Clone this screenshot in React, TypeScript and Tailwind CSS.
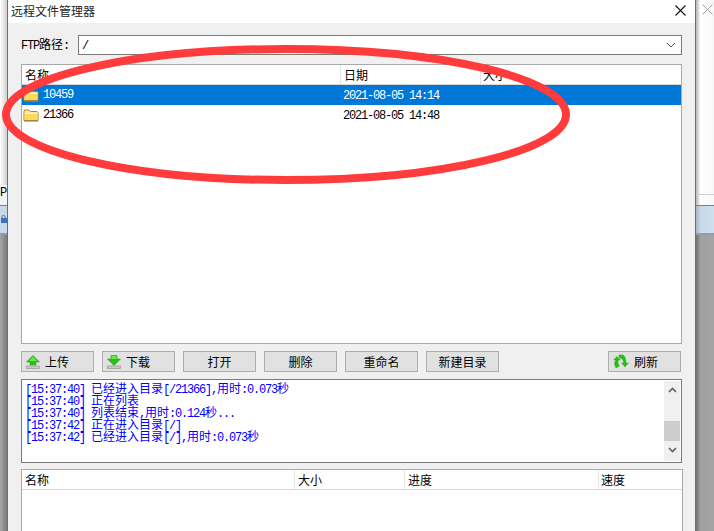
const cjk = "font-['Noto_Sans_CJK_SC','Noto_Sans',sans-serif]";

// ASCII runs get squeezed to 6px per char like the bitmap font in the picture
function T({ s }: { s: string }) {
  const parts = s.match(/[\x00-\x7f]+|[^\x00-\x7f]+/g) || [];
  return (
    <>
      {parts.map((p, i) =>
        /^[\x00-\x7f]/.test(p) ? (
          <span key={i} className="font-['Liberation_Mono',monospace] tracking-[-1.2px] whitespace-pre">
            {p}
          </span>
        ) : (
          <span key={i}>{p}</span>
        )
      )}
    </>
  );
}

function FolderIcon() {
  return (
    <svg width="16" height="14" viewBox="0 0 16 14" className="shrink-0">
      <path d="M1 3.5 L1.5 2 L6 2 L7.5 3.5 L14 3.5 L15 4.5 L15 12.5 L1 12.5 Z" fill="#fbe9a0" stroke="#a8852c" strokeWidth="1" />
      <path d="M1.5 6 L14.5 6 L14.5 12 L1.5 12 Z" fill="#fdd95f" />
      <path d="M1.5 5.5 L14.5 5.5" stroke="#fff6cf" strokeWidth="1" />
      <path d="M1 13.5 L15.5 13.5" stroke="#8f8f8f" strokeWidth="1" opacity="0.6" />
    </svg>
  );
}

function UpIcon() {
  return (
    <svg width="14" height="14" viewBox="0 0 14 14" className="shrink-0">
      <path d="M7 0.5 L13.5 7 L10 7 L10 10 L4 10 L4 7 L0.5 7 Z" fill="#22c21a" stroke="#2f9e24" strokeWidth="0.6" />
      <path d="M7 1.5 L11 6 L3 6 Z" fill="#6fe04a" />
      <rect x="0.5" y="11" width="13" height="2.5" fill="#c9c9c9" stroke="#8a8a8a" strokeWidth="0.6" />
    </svg>
  );
}

function DownIcon() {
  return (
    <svg width="14" height="14" viewBox="0 0 14 14" className="shrink-0">
      <path d="M4 0.5 L10 0.5 L10 4 L13.5 4 L7 10.5 L0.5 4 L4 4 Z" fill="#22c21a" stroke="#2f9e24" strokeWidth="0.6" />
      <path d="M4.5 1 L9.5 1 L9.5 4 L4.5 4 Z" fill="#6fe04a" />
      <rect x="0.5" y="11" width="13" height="2.5" fill="#c9c9c9" stroke="#8a8a8a" strokeWidth="0.6" />
    </svg>
  );
}

function RefreshIcon() {
  return (
    <svg width="16" height="16" viewBox="0 0 16 16" className="shrink-0">
      <path d="M3 14 C1 11 1 8 3 6 L0.5 6 L4 2.5 L7.5 6 L5.5 6 C4.5 8 5 10 6.5 12 Z" fill="#16c60c" stroke="#5a9e2a" strokeWidth="0.5" />
      <path d="M6 1 L10 1 C12 2 13 5 13 9 L15.5 9 L12 13 L8.5 9 L10.5 9 C10.5 6 9 4 6 3.5 Z" fill="#16c60c" stroke="#5a9e2a" strokeWidth="0.5" />
    </svg>
  );
}

function Btn({ w = "", icon, label, iconGap }: { w?: string; icon?: React.ReactNode; label: string; iconGap?: string }) {
  return (
    <button className={`w-[73px] h-[21px] bg-[#e1e1e1] border border-[#adadad] flex items-center text-[12px] leading-none text-black ${w} ${icon ? "justify-start pl-[4px]" : "justify-center"}`}>
      {icon}
      <span className={iconGap}>{label}</span>
    </button>
  );
}

const logLines = [
  "[15:37:40] 已经进入目录[/21366],用时:0.073秒",
  "[15:37:40] 正在列表",
  "[15:37:40] 列表结束,用时:0.124秒...",
  "[15:37:42] 正在进入目录[/]",
  "[15:37:42] 已经进入目录[/],用时:0.073秒",
];

const files = [
  { name: "10459", date: "2021-08-05 14:14", selected: true },
  { name: "21366", date: "2021-08-05 14:48", selected: false },
];

export default function App() {
  return (
    <div className={`relative flex w-[714px] h-[531px] overflow-hidden bg-white text-[12px] text-black ${cjk}`}>
      {/* window behind, left edge */}
      <div className="w-[7px] shrink-0 flex flex-col">
        <div className="h-[185px] bg-gradient-to-r from-white to-[#d0d0d0]" />
        <div className="h-[20px] bg-[#f4f4f4] font-['Liberation_Mono',monospace] text-[12px] leading-[14px] pt-[1px] overflow-hidden whitespace-nowrap">P</div>
        <div className="h-[30px] bg-[#c9d9e8] border-t border-[#808080] border-b-2 border-b-[#8c9cb4] overflow-hidden flex items-center">
          <svg width="7" height="10" viewBox="0 0 7 10" className="mt-[-2px]">
            <path d="M2 4 L2 2.5 C2 1 5 1 5 2.5 L5 4" fill="none" stroke="#5a6f9a" strokeWidth="1" />
            <rect x="1" y="4" width="6" height="5" fill="#3f6fc4" />
          </svg>
        </div>
        <div className="flex-1 bg-gradient-to-r from-[#a6a6a6] to-[#7a7a7a]" />
      </div>

      {/* dialog */}
      <div className="w-[689px] shrink-0 border-x border-x-[#6e6e6e] bg-[#f0f0f0] flex flex-col overflow-hidden">
        <div className="h-[23px] shrink-0 bg-white flex items-center justify-between pl-[3px] pr-[9px]">
          <span className="text-[12px] leading-none text-[#222] mt-[-2px]">远程文件管理器</span>
          <svg width="11" height="11" viewBox="0 0 11 11" className="mt-[-2px]">
            <path d="M0.5 0.5 L10.5 10.5 M10.5 0.5 L0.5 10.5" stroke="#111" strokeWidth="1.1" />
          </svg>
        </div>

        <div className="pl-[13px] pt-[12px] flex flex-col shrink-0">
          {/* path */}
          <div className="flex items-center w-[661px] h-[20px]">
            <span className="w-[57px] leading-none"><T s="FTP" />路径<T s=":" /></span>
            <div className="flex-1 h-[20px] bg-white border border-[#7a7a7a] flex items-center justify-between pl-[3px] pr-[5px]">
              <span className="leading-none"><T s="/" /></span>
              <svg width="10" height="6" viewBox="0 0 10 6">
                <path d="M1 1 L5 5 L9 1" fill="none" stroke="#555" strokeWidth="1" />
              </svg>
            </div>
          </div>

          {/* remote files */}
          <div className="mt-[9px] w-[661px] h-[280px] bg-white border border-[#a9a9a9] flex flex-col">
            <div className="flex h-[20px] shrink-0 border-b border-[#d8d8d8] leading-none">
              <div className="w-[319px] pl-[3px] flex items-center border-r border-[#e5e5e5]">名称</div>
              <div className="w-[140px] pl-[3px] flex items-center border-r border-[#e5e5e5]">日期</div>
              <div className="flex-1 pl-[2px] flex items-center">大小</div>
            </div>
            {files.map((f) => (
              <div key={f.name} className={`flex h-[20px] shrink-0 items-center leading-none ${f.selected ? "bg-[#0078d7] text-white" : ""}`}>
                <div className="w-[319px] pl-[1px] flex items-center gap-[4px]">
                  <FolderIcon />
                  <T s={f.name} />
                </div>
                <div className="pl-[2px]"><T s={f.date} /></div>
              </div>
            ))}
          </div>

          {/* actions */}
          <div className="mt-[7px] w-[660px] flex gap-[8px]">
            <Btn icon={<UpIcon />} label="上传" iconGap="ml-[5px]" />
            <Btn icon={<DownIcon />} label="下载" iconGap="ml-[5px]" />
            <Btn label="打开" />
            <Btn label="删除" />
            <Btn label="重命名" />
            <Btn label="新建目录" />
            <Btn w="ml-auto" icon={<RefreshIcon />} label="刷新" iconGap="ml-[5px]" />
          </div>

          {/* log */}
          <div className="mt-[7px] w-[661px] h-[84px] bg-white border border-[#7a7a7a] flex">
            <div className="flex-1 pl-[3px] pt-[2px] text-[#0000ff] text-[12px] leading-[12px] whitespace-pre">
              {logLines.map((line) => (
                <div key={line} className="h-[12px]"><T s={line} /></div>
              ))}
            </div>
            <div className="w-[16px] mr-[1px] my-[1px] bg-[#f0f0f0] flex flex-col items-center">
              <svg width="9" height="6" viewBox="0 0 9 6" className="mt-[6px]">
                <path d="M1 5 L4.5 1.5 L8 5" fill="none" stroke="#606060" strokeWidth="1.6" />
              </svg>
              <div className="mt-[28px] w-full h-[20px] bg-[#cdcdcd]" />
              <svg width="9" height="6" viewBox="0 0 9 6" className="mt-[6px]">
                <path d="M1 1 L4.5 4.5 L8 1" fill="none" stroke="#606060" strokeWidth="1.6" />
              </svg>
            </div>
          </div>

          {/* transfer queue */}
          <div className="mt-[6px] w-[662px] h-[80px] bg-white border border-[#a9a9a9]">
            <div className="flex h-[20px] border-b border-[#d8d8d8] leading-none">
              <div className="w-[273px] pl-[3px] flex items-center border-r border-[#e5e5e5]">名称</div>
              <div className="w-[110px] pl-[3px] flex items-center border-r border-[#e5e5e5]">大小</div>
              <div className="w-[194px] pl-[3px] flex items-center border-r border-[#e5e5e5]">进度</div>
              <div className="flex-1 pl-[2px] flex items-center">速度</div>
            </div>
          </div>
        </div>
      </div>

      {/* window behind, right edge */}
      <div className="flex-1 flex flex-col">
        <div className="h-[195px] bg-gradient-to-r from-[#b5b5b5] via-white via-[25%] to-[#f8f8f8] border-b border-[#d0d0d0] pt-[4px] pl-[6px]">
          <svg width="11" height="11" viewBox="0 0 11 11">
            <path d="M0.5 0.5 L10.5 10.5 M10.5 0.5 L0.5 10.5" stroke="#a0a0a0" strokeWidth="1" />
          </svg>
        </div>
        <div className="h-[10px] bg-gradient-to-r from-[#b5b5b5] via-white via-[25%] to-[#f8f8f8]" />
        <div className="h-[30px] bg-gradient-to-r from-[#a8b6c4] via-[#c9d9e8] via-[25%] to-[#d0dfee] border-t border-[#808080] border-b-2 border-b-[#8c9cb4]" />
        <div className="flex-1 bg-gradient-to-r from-[#707070] via-[#a0a0a0] via-[25%] to-[#a4a4a4]" />
      </div>

      {/* red marker ring drawn on the screenshot */}
      <svg width="714" height="531" className="absolute left-0 top-0 pointer-events-none">
        <ellipse cx="286" cy="114.5" rx="280" ry="65.5" fill="none" stroke="#ff3b3b" strokeWidth="8" />
      </svg>
    </div>
  );
}
